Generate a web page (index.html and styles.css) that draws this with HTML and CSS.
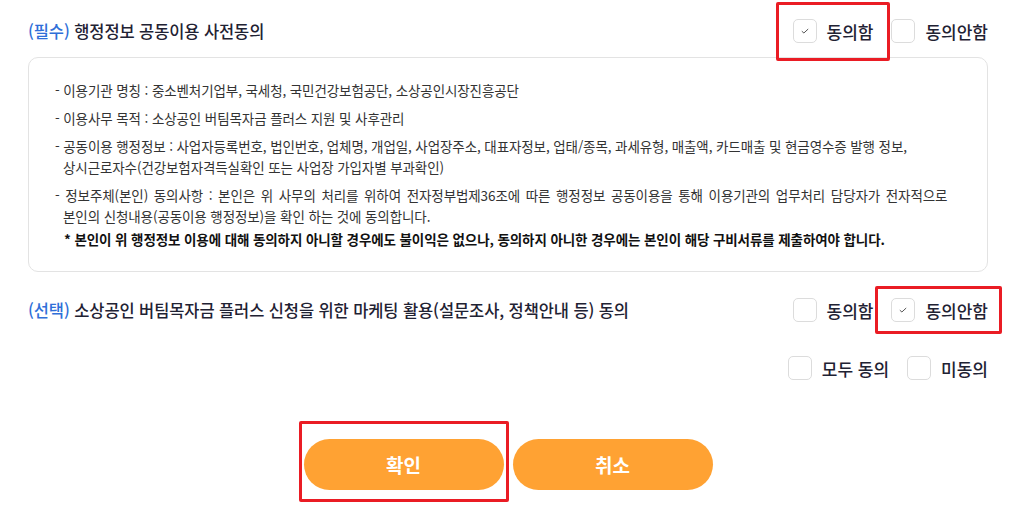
FILE: index.html
```html
<!DOCTYPE html>
<html lang="ko">
<head>
    <meta charset="UTF-8">
    <meta name="viewport" content="width=device-width, initial-scale=1.0">
    <title>행정정보 공동이용 동의</title>
    <link rel="stylesheet" href="styles.css">
</head>
<body>

<div class="container">
    <!-- 필수 동의 -->
    <div class="agree-row first">
        <h3 class="agree-title"><span class="tag">(필수)</span> 행정정보 공동이용 사전동의</h3>
        <div class="choices">
            <label class="choice marked mark-a">
                <span class="chk">
                    <svg width="10" height="8" viewBox="0 0 10 8"><path d="M1.8 4.2 L3.9 6 L8.2 2" fill="none" stroke="#555" stroke-width="1"/></svg>
                </span>
                동의함
            </label>
            <label class="choice">
                <span class="chk"></span>
                동의안함
            </label>
        </div>
    </div>

    <div class="terms-box">
        <p class="item">- 이용기관 명칭 : 중소벤처기업부, 국세청, 국민건강보험공단, 소상공인시장진흥공단</p>
        <p class="item">- 이용사무 목적 : 소상공인 버팀목자금 플러스 지원 및 사후관리</p>
        <p class="item">- 공동이용 행정정보 : 사업자등록번호, 법인번호, 업체명, 개업일, 사업장주소, 대표자정보, 업태/종목, 과세유형, 매출액, 카드매출 및 현금영수증 발행 정보,<br>상시근로자수(건강보험자격득실확인 또는 사업장 가입자별 부과확인)</p>
        <p class="item"><span class="wide">- 정보주체(본인) 동의사항 : 본인은 위 사무의 처리를 위하여 전자정부법제36조에 따른 행정정보 공동이용을 통해 이용기관의 업무처리 담당자가 전자적으로</span><br>본인의 신청내용(공동이용 행정정보)을 확인 하는 것에 동의합니다.</p>
        <p class="note">* 본인이 위 행정정보 이용에 대해 동의하지 아니할 경우에도 불이익은 없으나, 동의하지 아니한 경우에는 본인이 해당 구비서류를 제출하여야 합니다.</p>
    </div>

    <!-- 선택 동의 -->
    <div class="agree-row second">
        <h3 class="agree-title"><span class="tag">(선택)</span> 소상공인 버팀목자금 플러스 신청을 위한 마케팅 활용(설문조사, 정책안내 등) 동의</h3>
        <div class="choices">
            <label class="choice">
                <span class="chk"></span>
                동의함
            </label>
            <label class="choice marked mark-b">
                <span class="chk">
                    <svg width="10" height="8" viewBox="0 0 10 8"><path d="M1.8 4.2 L3.9 6 L8.2 2" fill="none" stroke="#555" stroke-width="1"/></svg>
                </span>
                동의안함
            </label>
        </div>
    </div>

    <div class="agree-row all">
        <div class="choices">
            <label class="choice">
                <span class="chk"></span>
                모두 동의
            </label>
            <label class="choice">
                <span class="chk"></span>
                미동의
            </label>
        </div>
    </div>

    <div class="btn-area">
        <button type="button" class="btn marked mark-c">확인</button>
        <button type="button" class="btn">취소</button>
    </div>
</div>

</body>
</html>
```

FILE: styles.css
```css
body {
    margin: 0;
    font-family: "Noto Sans CJK KR", "Noto Sans", sans-serif;
    background-color: #fff;
    color: #222;
}
.container {
    width: 960px;
    padding-left: 28px;
    padding-bottom: 14px;
}

/* 동의 행 */
.agree-row {
    display: flex;
    align-items: center;
    justify-content: space-between;
    height: 46px;
}
.agree-row.first {
    margin-top: 8px;
    margin-bottom: 3px;
}
.agree-row.second {
    margin-top: 15px;
}
.agree-row.all {
    justify-content: flex-end;
    margin-top: 12px;
}
.agree-title {
    margin: 0;
    font-size: 16.5px;
    font-weight: 500;
    color: #1f2233;
    letter-spacing: -0.1px;
}
.agree-title .tag {
    color: #2f6fd8;
}
.choices {
    display: flex;
    align-items: center;
    gap: 18px;
}
.choice {
    position: relative;
    display: flex;
    align-items: center;
    gap: 10px;
    font-size: 17px;
    font-weight: 500;
    color: #1f2233;
    cursor: pointer;
}
.chk {
    width: 22px;
    height: 22px;
    border: 1px solid #dcdcdc;
    border-radius: 5px;
    display: flex;
    align-items: center;
    justify-content: center;
    background: #fff;
}

/* 빨간 강조 박스 */
.marked::after {
    content: "";
    position: absolute;
    border: 3px solid #ea1c24;
    border-radius: 2px;
    pointer-events: none;
}
.mark-a::after {
    left: -17px;
    right: -17px;
    top: -17px;
    bottom: -17px;
}
.mark-b::after {
    left: -16px;
    right: -14px;
    top: -12px;
    bottom: -11px;
}
.mark-c::after {
    left: -5px;
    right: -5px;
    top: -18px;
    bottom: -12px;
}

/* 약관 박스 */
.terms-box {
    border: 1px solid #e3e3e3;
    border-radius: 10px;
    padding: 22px 26px;
    height: 169px;
}
.terms-box p {
    margin: 0;
    font-size: 13.5px;
    line-height: 21px;
    color: #333;
    letter-spacing: -0.1px;
}
.terms-box .item {
    padding-left: 8px;
    text-indent: -8px;
    margin-bottom: 7px;
}
.terms-box .item:nth-child(4) {
    margin-bottom: 2px;
}
.terms-box .wide {
    word-spacing: 2px;
}
.terms-box .note {
    padding-left: 9px;
    font-weight: 700;
    color: #111;
}

/* 버튼 */
.btn-area {
    display: flex;
    justify-content: center;
    gap: 9px;
    margin-top: 48px;
}
.btn {
    position: relative;
    width: 200px;
    height: 51px;
    border: none;
    border-radius: 26px;
    background-color: #ffa233;
    color: #fff;
    font-family: inherit;
    font-size: 19px;
    font-weight: 700;
    cursor: pointer;
}
```
